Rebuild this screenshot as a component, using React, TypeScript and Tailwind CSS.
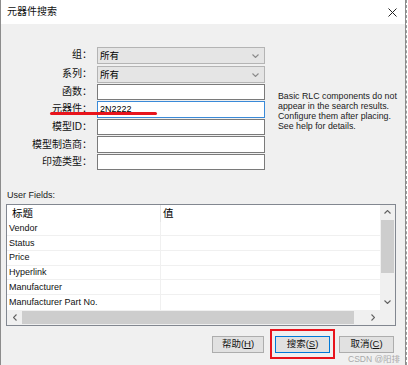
import React from "react";

const Chev = ({ dir, className }: { dir: "up" | "down" | "left" | "right"; className?: string }) => {
  const d =
    dir === "down"
      ? "M0.5 0.5 L3.5 3.5 L6.5 0.5"
      : dir === "up"
      ? "M0.5 3.5 L3.5 0.5 L6.5 3.5"
      : dir === "left"
      ? "M3.5 0.5 L0.5 3.5 L3.5 6.5"
      : "M0.5 0.5 L3.5 3.5 L0.5 6.5";
  const vb = dir === "down" || dir === "up" ? "0 0 7 4" : "0 0 4 7";
  const w = dir === "down" || dir === "up" ? 7 : 4;
  const h = dir === "down" || dir === "up" ? 4 : 7;
  return (
    <svg width={w} height={h} viewBox={vb} className={className} fill="none">
      <path d={d} stroke="currentColor" strokeWidth="1.1" />
    </svg>
  );
};

const Label = ({ children }: { children: React.ReactNode }) => (
  <div className="w-[91px] h-[16.5px] flex items-center justify-end text-[10px] leading-none text-[#111]">
    {children}
  </div>
);

const Select = ({ value }: { value: string }) => (
  <div className="ml-[5px] w-[168px] h-[17px] border border-[#b4b4b4] bg-[#e5e5e5] flex items-center justify-between pl-[2px] pr-[5px] text-[9.5px] leading-none">
    <span>{value}</span>
    <Chev dir="down" className="text-[#8a8a8a]" />
  </div>
);

const Input = ({ value, focused }: { value?: string; focused?: boolean }) => (
  <div
    className={
      "ml-[5px] w-[168px] h-[16.5px] border bg-white flex items-center pl-[2px] text-[9px] leading-none " +
      (focused ? "border-[#3a8ad8]" : "border-[#7a7a7a]")
    }
  >
    {value}
  </div>
);

const rows = ["Vendor", "Status", "Price", "Hyperlink", "Manufacturer", "Manufacturer Part No."];

const Btn = ({ label, k, w, blue }: { label: string; k: string; w: string; blue?: boolean }) => (
  <div
    className={
      "h-[17px] border bg-[#e1e1e1] flex items-center justify-center text-[9.5px] leading-none text-[#111] " +
      w +
      " " +
      (blue ? "border-[#0078d7]" : "border-[#adadad]")
    }
  >
    {label}(<span className="underline">{k}</span>)
  </div>
);

export default function App() {
  return (
    <div className="w-[408px] h-[365px] flex bg-white overflow-hidden relative font-[family-name:'Liberation_Sans','Noto_Sans_CJK_SC',sans-serif] text-black">
      <div className="w-[406px] h-full border-l border-r border-[#8c8c8c] flex flex-col">
        {/* title bar */}
        <div className="h-[24px] bg-white flex items-center justify-between pl-[6px] pr-[8px] shrink-0">
          <span className="text-[10px] leading-none text-[#111]">元器件搜索</span>
          <svg width="9" height="9" viewBox="0 0 9 9" className="mt-[1px]">
            <path d="M0.5 0.5 L8.5 8.5 M8.5 0.5 L0.5 8.5" stroke="#222" strokeWidth="1" />
          </svg>
        </div>

        {/* body */}
        <div className="flex-1 bg-[#f0f0f0] relative flex flex-col">
          {/* form */}
          <div className="flex pt-[23px]">
            <div className="flex flex-col">
              <div className="flex items-start h-[19px]">
                <Label>组：</Label>
                <Select value="所有" />
              </div>
              <div className="flex items-start h-[17.6px]">
                <Label>系列：</Label>
                <Select value="所有" />
              </div>
              <div className="flex items-start h-[17.6px]">
                <Label>函数：</Label>
                <Input />
              </div>
              <div className="flex items-start h-[17.6px]">
                <Label>元器件：</Label>
                <Input value="2N2222" focused />
              </div>
              <div className="flex items-start h-[17.6px]">
                <Label>模型ID：</Label>
                <Input />
              </div>
              <div className="flex items-start h-[17.6px]">
                <Label>模型制造商：</Label>
                <Input />
              </div>
              <div className="flex items-start h-[17.6px]">
                <Label>印迹类型：</Label>
                <Input />
              </div>
            </div>
            <div className="ml-[13px] mt-[44px] text-[8.8px] leading-[10px] text-[#1a1a1a] whitespace-nowrap">
              Basic RLC components do not
              <br />
              appear in the search results.
              <br />
              Configure them after placing.
              <br />
              See help for details.
            </div>
          </div>

          {/* user fields */}
          <div className="mt-[18px] pl-[6px] text-[9px] leading-[10px] text-[#1a1a1a]">User Fields:</div>
          <div className="mt-[4px] ml-[5px] w-[390px] border border-[#828790] bg-white flex flex-col">
            <div className="flex">
              <div className="w-[373px] flex flex-col">
                <div className="h-[17px] flex">
                  <div className="w-[154px] border-r border-[#e5e5e5] pl-[5px] flex items-center text-[10.5px] leading-none">
                    标题
                  </div>
                  <div className="pl-[2px] flex items-center text-[10.5px] leading-none">值</div>
                </div>
                {rows.map((r, i) => (
                  <div
                    key={r}
                    className={
                      "h-[14.7px] flex " + (i < rows.length - 1 ? "border-b border-[#f0f0f0]" : "")
                    }
                  >
                    <div className="w-[154px] border-r border-[#f0f0f0] pl-[2px] flex items-center text-[9px] leading-none text-[#111] whitespace-nowrap">
                      {r}
                    </div>
                    <div className="flex-1" />
                  </div>
                ))}
              </div>
              {/* vertical scrollbar */}
              <div className="w-[15px] bg-[#f0f0f0] flex flex-col">
                <div className="h-[15px] flex items-center justify-center text-[#606060]">
                  <Chev dir="up" />
                </div>
                <div className="flex-1 flex flex-col">
                  <div className="mx-[1px] h-[53px] bg-[#cdcdcd]" />
                </div>
                <div className="h-[15px] flex items-center justify-center text-[#606060]">
                  <Chev dir="down" />
                </div>
              </div>
            </div>
            {/* horizontal scrollbar */}
            <div className="h-[15px] flex">
              <div className="w-[373px] bg-[#f0f0f0] flex">
                <div className="w-[15px] flex items-center justify-center text-[#606060]">
                  <Chev dir="left" />
                </div>
                <div className="w-[332px] my-[1px] bg-[#cdcdcd]" />
                <div className="flex-1" />
                <div className="w-[15px] flex items-center justify-center text-[#606060]">
                  <Chev dir="right" />
                </div>
              </div>
              <div className="w-[15px] bg-[#f0f0f0]" />
            </div>
          </div>

          {/* buttons */}
          <div className="mt-[10px] flex justify-end pr-[11px]">
            <Btn label="帮助" k="H" w="w-[52px]" />
            <div className="relative ml-[11px]">
              <Btn label="搜索" k="S" w="w-[55px]" blue />
              <div className="absolute left-[-5px] top-[-7px] w-[65px] h-[30px] border-2 border-[#e8141c]" />
            </div>
            <div className="ml-[9px]">
              <Btn label="取消" k="C" w="w-[55px]" />
            </div>
          </div>

          {/* red annotation underline */}
          <div className="absolute left-[49px] top-[88px] w-[107px] h-[3px] rounded-full bg-[#e8141c]" />
        </div>
      </div>
      <div className="w-[2px] h-full border-l border-dashed border-[#9a9a9a]" />

      {/* watermark */}
      <div className="absolute left-[348px] top-[354px] text-[8.5px] leading-[10px] text-[#a9a9a9] whitespace-nowrap">
        CSDN @阳排
      </div>
    </div>
  );
}
